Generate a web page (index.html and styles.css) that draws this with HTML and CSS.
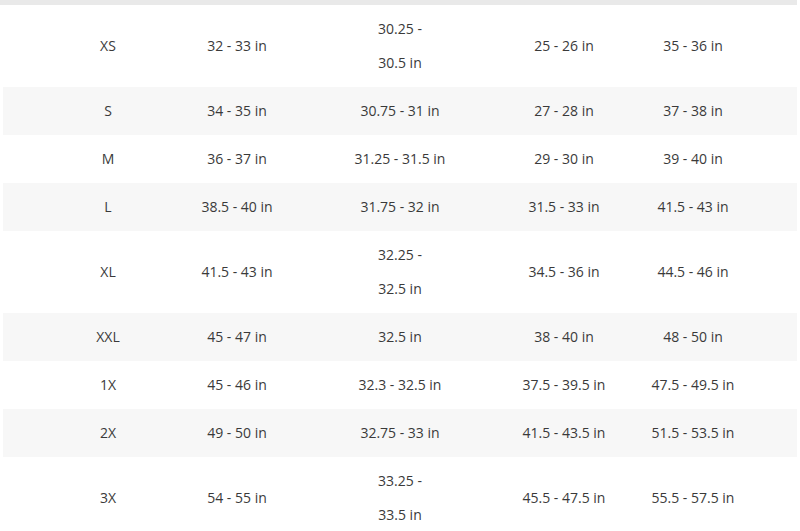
FILE: index.html
```html
<!DOCTYPE html>
<html>
<head>
<meta charset="utf-8">
<link rel="stylesheet" href="styles.css">
</head>
<body>
<div class="chart">
  <div class="topbar"></div>
  <div class="row"><div class="c">XS</div><div class="c">32 - 33 in</div><div class="c">30.25 -<br>30.5 in</div><div class="c">25 - 26 in</div><div class="c">35 - 36 in</div></div>
  <div class="row alt"><div class="c">S</div><div class="c">34 - 35 in</div><div class="c">30.75 - 31 in</div><div class="c">27 - 28 in</div><div class="c">37 - 38 in</div></div>
  <div class="row"><div class="c">M</div><div class="c">36 - 37 in</div><div class="c">31.25 - 31.5 in</div><div class="c">29 - 30 in</div><div class="c">39 - 40 in</div></div>
  <div class="row alt"><div class="c">L</div><div class="c">38.5 - 40 in</div><div class="c">31.75 - 32 in</div><div class="c">31.5 - 33 in</div><div class="c">41.5 - 43 in</div></div>
  <div class="row"><div class="c">XL</div><div class="c">41.5 - 43 in</div><div class="c">32.25 -<br>32.5 in</div><div class="c">34.5 - 36 in</div><div class="c">44.5 - 46 in</div></div>
  <div class="row alt"><div class="c">XXL</div><div class="c">45 - 47 in</div><div class="c">32.5 in</div><div class="c">38 - 40 in</div><div class="c">48 - 50 in</div></div>
  <div class="row"><div class="c">1X</div><div class="c">45 - 46 in</div><div class="c">32.3 - 32.5 in</div><div class="c">37.5 - 39.5 in</div><div class="c">47.5 - 49.5 in</div></div>
  <div class="row alt"><div class="c">2X</div><div class="c">49 - 50 in</div><div class="c">32.75 - 33 in</div><div class="c">41.5 - 43.5 in</div><div class="c">51.5 - 53.5 in</div></div>
  <div class="row"><div class="c">3X</div><div class="c">54 - 55 in</div><div class="c">33.25 -<br>33.5 in</div><div class="c">45.5 - 47.5 in</div><div class="c">55.5 - 57.5 in</div></div>
</div>
</body>
</html>
```
FILE: styles.css
```css
html, body {
  margin: 0;
  padding: 0;
  background: #ffffff;
}
body {
  font-family: "Open Sans", "Liberation Sans", sans-serif;
  font-size: 14px;
  color: #3a3a3a;
  overflow: hidden;
  height: 531px;
}
.chart {
  display: flex;
  flex-direction: column;
  padding: 0 3px;
}
.topbar {
  height: 5px;
  margin: 0 -3px 0 -3px;
  background: #e9e9e9;
  margin-right: 0;
}
.row {
  display: grid;
  grid-template-columns: 96px 162px 164px 164px 94px;
  padding: 7px 0 7px 57px;
  line-height: 34px;
  background: #ffffff;
}
.row.alt {
  background: #f7f7f7;
}
.c {
  display: flex;
  flex-direction: column;
  justify-content: center;
  align-items: center;
  text-align: center;
  white-space: nowrap;
}
```
